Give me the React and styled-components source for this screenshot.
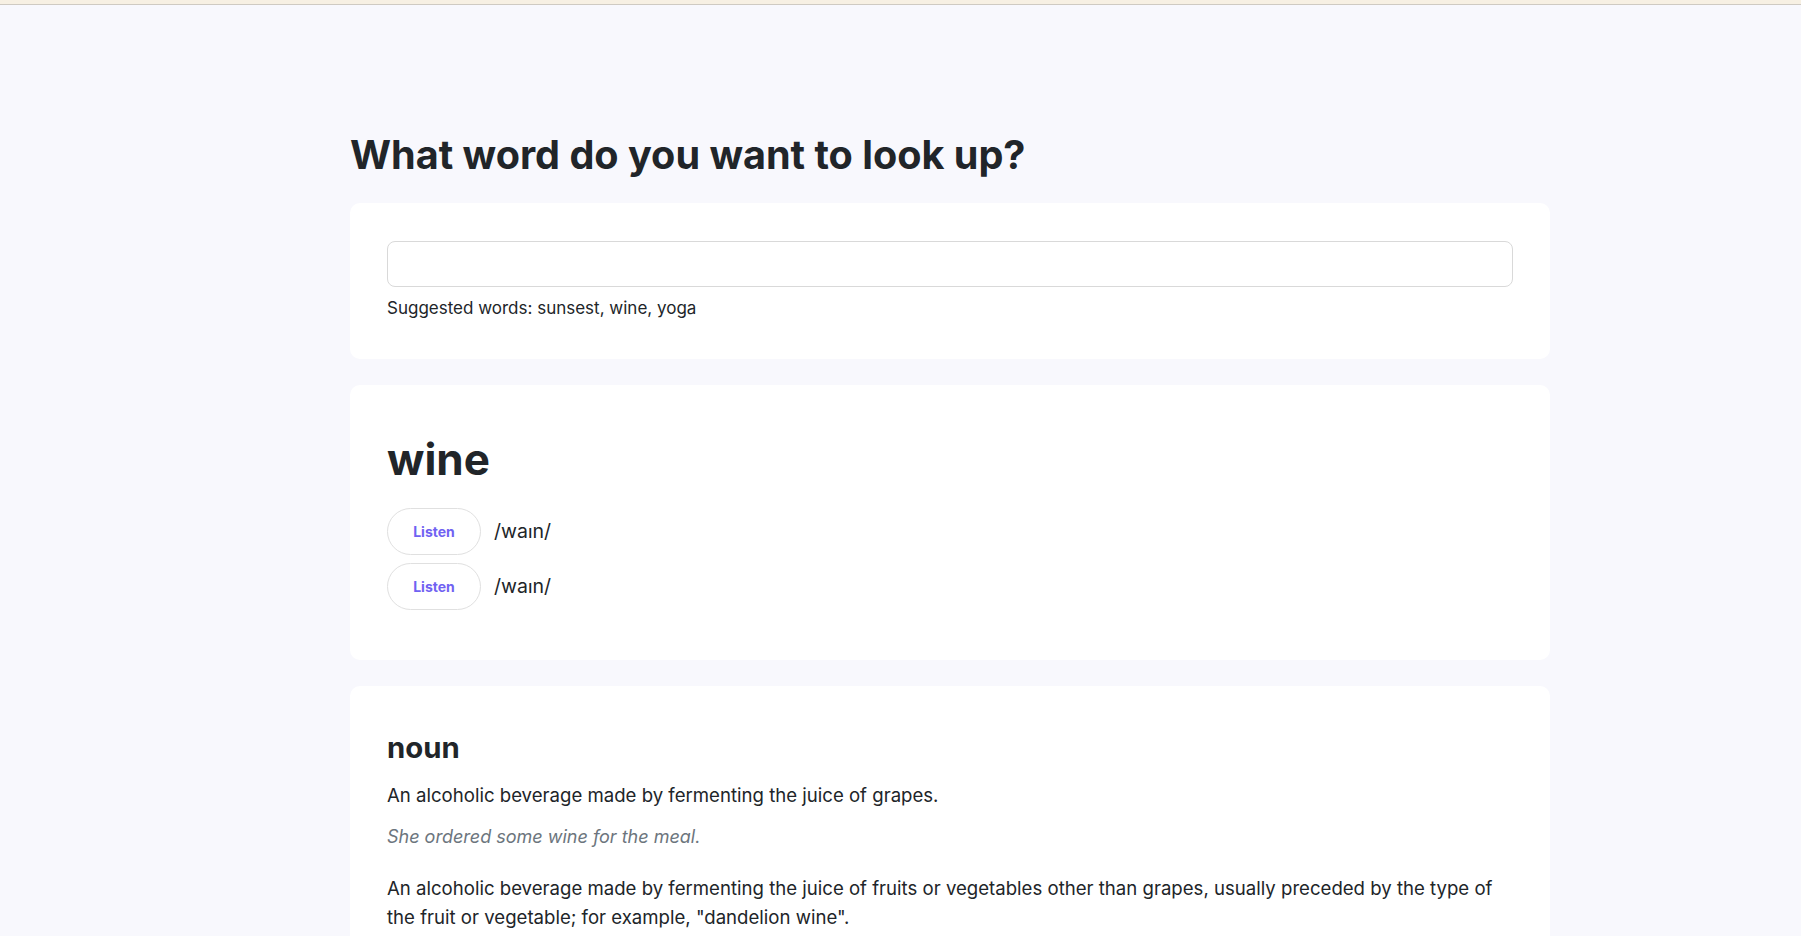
import React from 'react';
import styled, { createGlobalStyle } from 'styled-components';

// <App>: dictionary lookup page with a search card and the result cards
const GlobalStyle = createGlobalStyle`
  body {
    margin: 0;
    background: #f8f8fd;
    font-family: Inter, Lato, "Liberation Sans", sans-serif;
    color: #212529;
  }
`;

const phonetics = ['/waɪn/', '/waɪn/'];

const meanings = [
  {
    part: 'noun',
    items: [
      {
        text: 'An alcoholic beverage made by fermenting the juice of grapes.',
        example: 'She ordered some wine for the meal.',
      },
      {
        text: 'An alcoholic beverage made by fermenting the juice of fruits or vegetables other than grapes, usually preceded by the type of the fruit or vegetable; for example, "dandelion wine".',
      },
    ],
  },
];

export default function App() {
  return (
    <>
      <GlobalStyle />
      <TopStrip />
      <Main>
        <Title>What word do you want to look up?</Title>
        <Card $bottom={36}>
          <SearchInput type="search" aria-label="word" />
          <Hint>Suggested words: sunsest, wine, yoga</Hint>
        </Card>
        <Card $top={39} $bottom={50}>
          <Word>wine</Word>
          {phonetics.map((p, i) => (
            <PhoneticRow key={i}>
              <ListenButton>Listen</ListenButton>
              <Phonetic>{p}</Phonetic>
            </PhoneticRow>
          ))}
        </Card>
        {meanings.map((m) => (
          <Card key={m.part}>
            <PartOfSpeech>{m.part}</PartOfSpeech>
            {m.items.map((d, i) => (
              <div key={i}>
                <Definition>{d.text}</Definition>
                {d.example && <Example>{d.example}</Example>}
              </div>
            ))}
          </Card>
        ))}
      </Main>
    </>
  );
}

// styles
const TopStrip = styled.div`
  height: 4px;
  background: #f7f0e3;
  border-bottom: 1px solid #cfcac2;
`;

const Main = styled.main`
  width: 1200px;
  margin-left: 350px;
  padding-top: 126px;
`;

const Title = styled.h1`
  margin: 0 0 24px;
  font-size: 39.6px;
  line-height: 48px;
  font-weight: 700;
`;

const Card = styled.section`
  background: #fff;
  border-radius: 10px;
  padding: ${(p) => p.$top ?? 38}px 37px ${(p) => p.$bottom ?? 38}px;
  margin-bottom: 26px;
`;

const SearchInput = styled.input`
  display: block;
  box-sizing: border-box;
  width: 100%;
  height: 46px;
  border: 1px solid #d9d9d9;
  border-radius: 8px;
  background: #fff;
  outline: none;
`;

const Hint = styled.p`
  margin: 7px 0 0;
  font-size: 17px;
  line-height: 28.8px;
`;

const Word = styled.h2`
  margin: 7px 0 20px;
  font-size: 44px;
  line-height: 57px;
  font-weight: 700;
`;

const PhoneticRow = styled.div`
  display: flex;
  align-items: center;
  gap: 13px;
  & + & {
    margin-top: 8px;
  }
`;

const ListenButton = styled.button`
  box-sizing: border-box;
  width: 94px;
  height: 47px;
  border: 1px solid #e0e0e0;
  border-radius: 24px;
  background: #fff;
  color: #7062f2;
  font-family: inherit;
  font-size: 14px;
  font-weight: 700;
  cursor: pointer;
`;

const Phonetic = styled.span`
  font-size: 19.5px;
`;

const PartOfSpeech = styled.h3`
  margin: 7px 0 16px;
  font-size: 29.3px;
  line-height: 34px;
  font-weight: 700;
`;

const Definition = styled.p`
  margin: 0 0 13px;
  font-size: 18.6px;
  line-height: 28.8px;
`;

const Example = styled.p`
  margin: 0 0 23px;
  font-size: 18px;
  line-height: 28.8px;
  font-style: italic;
  color: #6c757d;
`;
